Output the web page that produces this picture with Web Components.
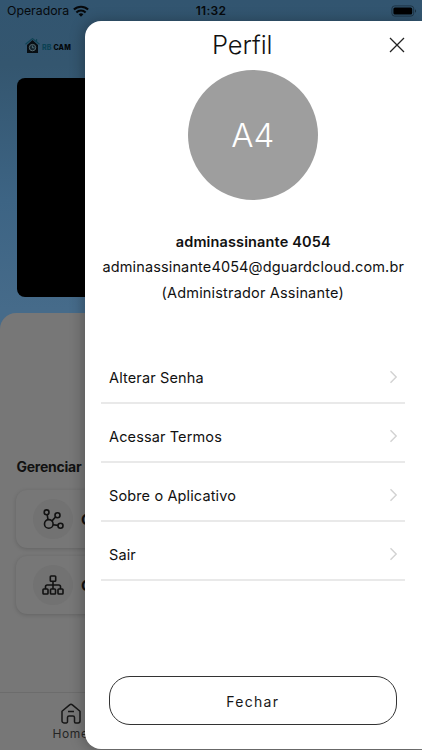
<!DOCTYPE html>
<html lang="pt-BR">
<head>
<meta charset="utf-8">
<title>Perfil</title>
<style>
html,body{margin:0;height:100%;overflow:hidden}
body{font-family:Inter,"Liberation Sans",sans-serif;color:#1b1b1b}
</style>
</head>
<body>
<app-shell></app-shell>
<script>
function define(name, html) {
  const t = document.createElement('template');
  t.innerHTML = '<style>*{box-sizing:border-box}svg{display:block}</style>' + html;
  customElements.define(name, class extends HTMLElement {
    constructor() {
      super();
      this.attachShadow({mode: 'open'}).appendChild(t.content.cloneNode(true));
    }
  });
}

define('status-bar', `
<style>
:host{display:grid;grid-template-columns:1fr auto 1fr;align-items:center;height:21px;padding:0 5px 0 7px;color:#06090c;font-size:12.3px;line-height:21px}
.l{display:flex;align-items:center;gap:4px;letter-spacing:0}
.t{font-weight:600;font-size:12px;letter-spacing:.3px;padding-right:2px}
.b{justify-self:end}
</style>
<div class="l"><span>Operadora</span>
<svg width="16" height="12" viewBox="0 0 16 12"><path d="M8 11.8 5.6 9.2a3.6 3.6 0 0 1 4.8 0Z" fill="#06090c"/><g fill="none" stroke="#06090c" stroke-width="2.1"><path d="M3.4 7.4a6.6 6.6 0 0 1 9.2 0"/><path d="M.9 4.6a10.2 10.2 0 0 1 14.2 0"/></g></svg></div>
<div class="t">11:32</div>
<svg class="b" width="26" height="12" viewBox="0 0 26 12"><rect x=".9" y=".9" width="21.8" height="10.2" rx="2.8" fill="none" stroke="#1c3141" stroke-width=".9"/><rect x="2.4" y="2.4" width="18.8" height="7.2" rx="1.5" fill="#000"/><path d="M24 4.3c1.4.5 1.4 2.9 0 3.4Z" fill="#1c3141"/></svg>
`);

define('brand-logo', `
<style>
:host{display:flex;align-items:center;gap:2px;font-size:7px;font-weight:800;line-height:10px;letter-spacing:.2px;color:#03070a}
b{font-weight:800;color:#0c4254;letter-spacing:.2px}
span{padding-top:3px}
</style>
<svg width="15" height="16" viewBox="0 0 15 16"><path d="M2 7 7.5 2 13 7v8H2Z" fill="#080e13"/><path d="M.5 6.2 7.5.6l7 5.6M11.6 1v2.6" fill="none" stroke="#0f4354" stroke-width="1.1"/><circle cx="7.5" cy="9.6" r="3.2" fill="#14242e" stroke="#56696f" stroke-width="1"/><path d="M7.4 7.5v2.3h2" fill="none" stroke="#56747d" stroke-width=".9"/></svg>
<span><b>RB</b> CAM</span>
`);

define('action-card', `
<style>
:host{display:flex;align-items:center;width:390px;height:58px;padding-left:17px;gap:8px;border-radius:11px;background:#777;box-shadow:0 1px 4px rgba(0,0,0,.17);font-weight:700;font-size:15px;color:#111}
.c{display:grid;place-items:center;width:40px;height:40px;border-radius:50%;background:#727272}
</style>
<div class="c"><slot name="icon"></slot></div><slot></slot>
`);

define('home-tab', `
<style>
:host{display:flex;flex-direction:column;align-items:center;width:141px;padding-top:10px;font-size:12px;line-height:16px;letter-spacing:.6px;color:#252525}
svg{margin-bottom:2px}
</style>
<svg width="20" height="21" viewBox="0 0 20 21"><path d="M1 8.3 8.6 1.9a2 2 0 0 1 2.8 0L19 8.3V18a1.9 1.9 0 0 1-1.9 1.9h-2.4a1.2 1.2 0 0 1-1.2-1.2V14.5a1.6 1.6 0 0 0-1.6-1.6H8.1a1.6 1.6 0 0 0-1.6 1.6v4.2a1.2 1.2 0 0 1-1.2 1.2H2.9A1.9 1.9 0 0 1 1 18ZM7 8.4h6" fill="none" stroke="#171717" stroke-width="1.5" stroke-linejoin="round"/></svg>
<span>Home</span>
`);

define('home-screen', `
<style>
:host{display:flex;flex-direction:column;height:750px;width:422px;background:linear-gradient(#325570 0,#34566f 65px,#3d6484 200px,#466b8a 310px,#466b8a 340px)}
brand-logo{margin:16px 0 0 25px;height:18px}
.video{flex:none;width:390px;height:219px;margin:23px 0 0 16.5px;border-radius:8px;background:#000}
.sheet{flex:1;display:flex;flex-direction:column;margin-top:16px;border-radius:16px 16px 0 0;background:#777}
h2{margin:144px 0 0 16.5px;font-size:14px;line-height:20px;font-weight:700;letter-spacing:-.25px;color:#111}
.cards{display:flex;flex-direction:column;gap:8px;padding:13px 0 0 16px}
.tabs{margin-top:auto;height:58px;border-top:1px solid #6c6c6c}
</style>
<status-bar></status-bar>
<brand-logo></brand-logo>
<div class="video"></div>
<div class="sheet">
<h2>Gerenciar</h2>
<div class="cards">
<action-card><svg slot="icon" width="21" height="21" viewBox="0 0 21 21" fill="none" stroke="#121212" stroke-width="1.6"><circle cx="5.8" cy="14.9" r="4.3"/><circle cx="3.6" cy="3.3" r="2.4"/><circle cx="14.5" cy="6.2" r="2.5"/><circle cx="17.5" cy="16.8" r="2.5"/><path d="m4.2 5.7.8 4.9M12.5 8 9 11.9M10 15.7l5 .7"/></svg>C</action-card>
<action-card><svg slot="icon" width="22" height="20" viewBox="0 0 22 20" fill="none" stroke="#121212" stroke-width="1.6" stroke-linejoin="round"><rect x="8.3" y="1" width="5.4" height="5.2" rx=".8"/><rect x="1" y="14" width="5" height="5" rx=".8"/><rect x="8.5" y="14" width="5" height="5" rx=".8"/><rect x="16" y="14" width="5" height="5" rx=".8"/><path d="M11 6.2V14M3.5 14v-2.3A1.7 1.7 0 0 1 5.2 10h11.6a1.7 1.7 0 0 1 1.7 1.7V14"/></svg>C</action-card>
</div>
<div class="tabs"><home-tab></home-tab></div>
</div>
`);

define('user-avatar', `
<style>
:host{display:grid;place-items:center;width:130px;height:130px;border-radius:50%;background:#9e9e9e;color:#fff;font-size:33px;font-weight:300;letter-spacing:0}
</style>
<span><slot></slot></span>
`);

define('menu-row', `
<style>
:host{display:flex;align-items:center;justify-content:space-between;height:59px;padding:7px 7px 0 8.5px;border-bottom:2px solid #e9e9e9;font-size:14.5px;letter-spacing:.13px;color:#111}
</style>
<slot></slot>
<svg width="9" height="14" viewBox="0 0 9 14"><path d="m1.5 1.3 5.7 5.7-5.7 5.7" fill="none" stroke="#d2d2d2" stroke-width="1.4"/></svg>
`);

define('profile-drawer', `
<style>
:host{display:flex;flex-direction:column;background:#fff;border-radius:16px 0 0 16px;box-shadow:-2px 0 14px rgba(0,0,0,.27)}
header{display:grid;grid-template-columns:50px 1fr 50px;align-items:center;height:48px}
h1{margin:0;padding-right:22px;text-align:center;font-weight:300;font-size:25.5px;line-height:48px;letter-spacing:-.1px;color:#111}
header svg{margin-left:17px}
user-avatar{align-self:center;margin:.5px 1px 0 0}
.info{margin-top:29px;text-align:center;font-size:14.5px;line-height:25.5px;letter-spacing:.13px;white-space:nowrap;color:#111}
.info div:first-child{font-weight:600}
.info div:last-child{letter-spacing:.18px;padding-right:1px}
nav{margin:40px 17px 0 16px}
button{margin:auto 25px 24px 24px;height:49px;border:1px solid #333;border-radius:21px;background:#fff;font:400 14px Inter,"Liberation Sans",sans-serif;letter-spacing:1.3px;padding-top:2px;color:#171717}
</style>
<header><i></i><h1>Perfil</h1><svg width="16" height="16" viewBox="0 0 16 16"><path d="m1 1 14 14M15 1 1 15" stroke="#222" stroke-width="1.3"/></svg></header>
<user-avatar>A4</user-avatar>
<div class="info"><div>adminassinante 4054</div><div>adminassinante4054@dguardcloud.com.br</div><div>(Administrador Assinante)</div></div>
<nav><menu-row>Alterar Senha</menu-row><menu-row>Acessar Termos</menu-row><menu-row>Sobre o Aplicativo</menu-row><menu-row>Sair</menu-row></nav>
<button>Fechar</button>
`);

define('app-shell', `
<style>
:host{display:block;position:relative;width:422px;height:750px;overflow:hidden}
profile-drawer{position:absolute;left:84.5px;top:21px;right:0;bottom:1px}
</style>
<home-screen></home-screen>
<profile-drawer></profile-drawer>
`);
</script>
</body>
</html>
